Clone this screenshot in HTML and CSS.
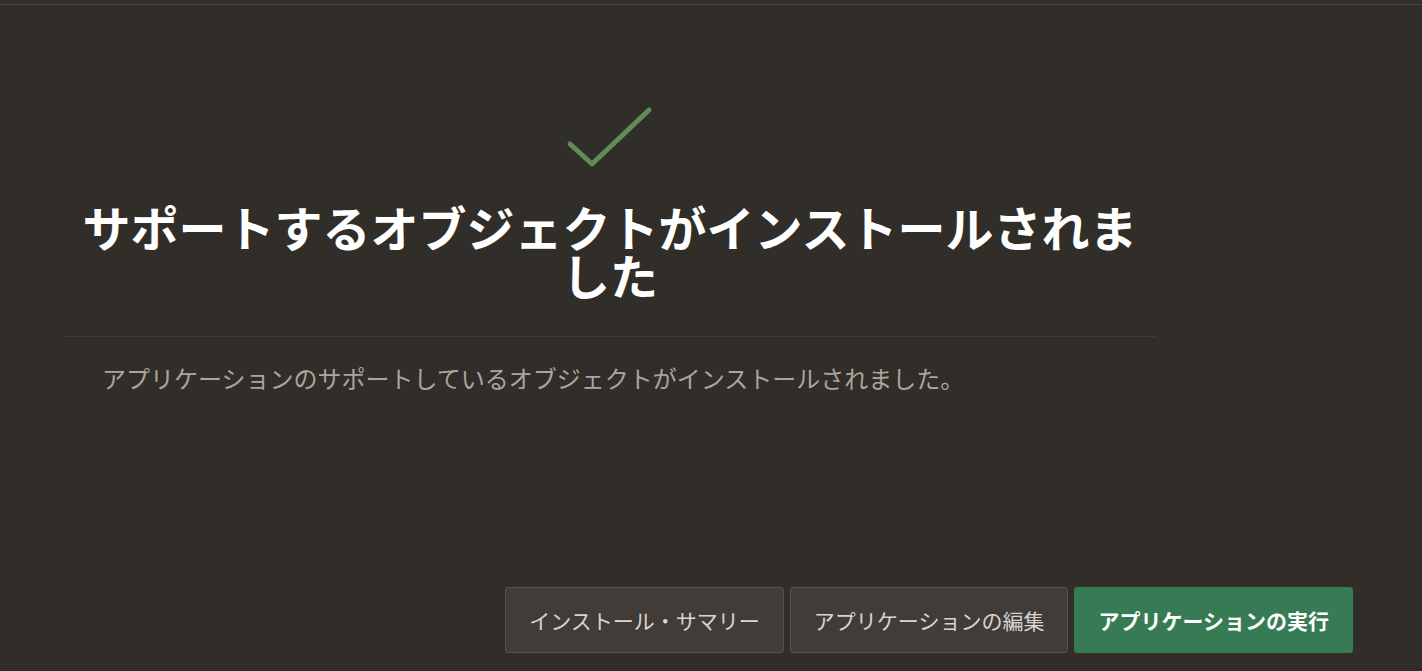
FILE: index.html
```html
<!DOCTYPE html>
<html lang="ja">
<head>
    <meta charset="UTF-8">
    <meta name="viewport" content="width=device-width, initial-scale=1.0">
    <title>インストール完了</title>
    <link rel="stylesheet" href="styles.css">
</head>
<body>
    <div class="top-rule"></div>
    <div class="install-page">
        <div class="result">
            <svg class="check-icon" width="88" height="62" viewBox="0 0 88 62">
                <path d="M4 38 L26 58 L83 4" fill="none" stroke="#5f8c5b" stroke-width="5" stroke-linecap="round" stroke-linejoin="round"/>
            </svg>
            <h1>サポートするオブジェクトがインストールされました</h1>
            <div class="divider"></div>
            <p>アプリケーションのサポートしているオブジェクトがインストールされました。</p>
        </div>

        <div class="actions">
            <button class="btn">インストール・サマリー</button>
            <button class="btn">アプリケーションの編集</button>
            <button class="btn btn-primary">アプリケーションの実行</button>
        </div>
    </div>
</body>
</html>
```

FILE: styles.css
```css
html, body {
    height: 100%;
}

body {
    margin: 0;
    background-color: #312d29;
    font-family: "Noto Sans CJK JP", "Noto Sans", sans-serif;
    color: #ffffff;
}

.top-rule {
    height: 4px;
    border-bottom: 1px solid #4a4540;
}

.install-page {
    height: calc(100% - 5px);
    display: flex;
    flex-direction: column;
    box-sizing: border-box;
    padding: 0 69px 18px 64px;
}

.result {
    width: 1092px;
    display: flex;
    flex-direction: column;
    align-items: center;
}

.check-icon {
    display: block;
    margin-top: 101px;
}

h1 {
    margin: 34px 0 0;
    width: 1070px;
    font-size: 48px;
    line-height: 48px;
    font-weight: 700;
    text-align: center;
}

.divider {
    align-self: stretch;
    height: 1px;
    margin-top: 38px;
    background-color: #3f3a35;
}

p {
    align-self: stretch;
    margin: 26px 0 0 38px;
    font-size: 24px;
    line-height: 30px;
    color: #aaa59f;
}

.actions {
    margin-top: auto;
    display: flex;
    justify-content: flex-end;
    gap: 6px;
}

.btn {
    height: 66px;
    padding: 0 23px;
    background-color: #413c38;
    border: 1px solid #57524c;
    border-radius: 3px;
    color: #d8d4cf;
    font-family: inherit;
    font-size: 21px;
    cursor: pointer;
}

.btn-primary {
    background-color: #377b54;
    border-color: #377b54;
    color: #ffffff;
    font-weight: 700;
}
```
